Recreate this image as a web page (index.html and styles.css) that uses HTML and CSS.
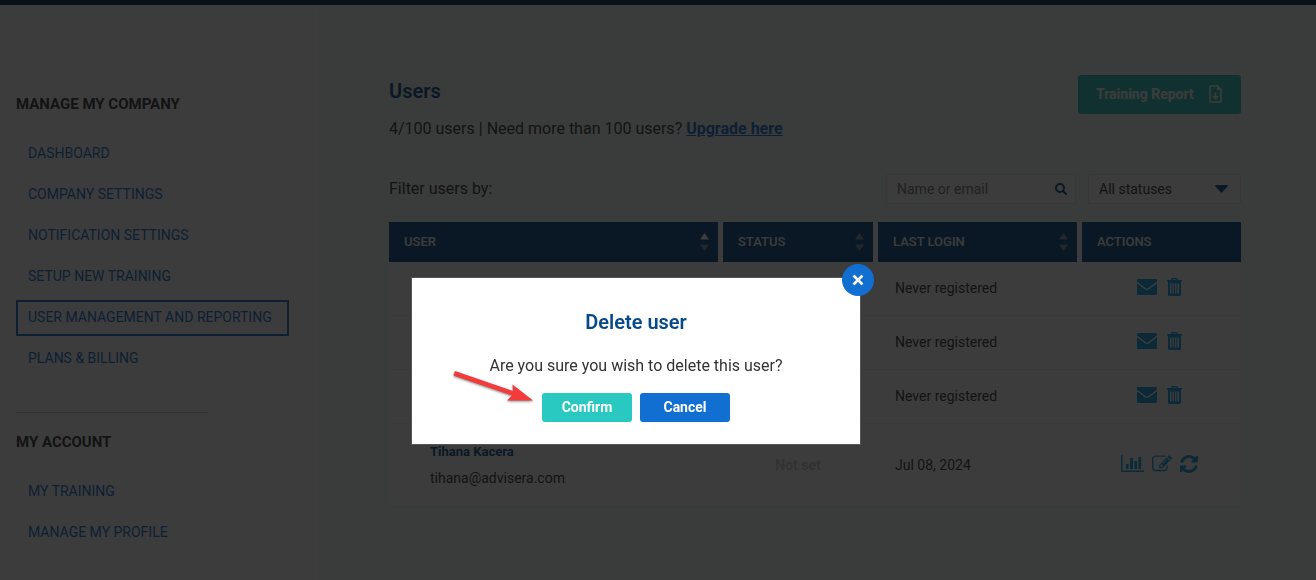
FILE: index.html
```html
<!DOCTYPE html>
<html lang="en">

<head>
    <meta charset="UTF-8">
    <meta name="viewport" content="width=device-width, initial-scale=1">
    <title>User management and reporting</title>
    <link rel="stylesheet" href="styles.css">
</head>

<body>
    <!-- icon shapes -->
    <svg class="sprite" aria-hidden="true">
        <symbol id="i-mail" viewBox="0 0 20 16">
            <path d="M1 0h18q1 0 1 1v1.500l-8.500 6.500q-1.500 1-3 0L0 2.500V1q0-1 1-1zM0 4.300l7.800 6q2.200 1.400 4.400 0l7.800-6V15q0 1-1 1H1q-1 0-1-1z" />
        </symbol>
        <symbol id="i-trash" viewBox="0 0 15 18">
            <path fill-rule="evenodd" d="M4 2V1.500Q4 0 5.500 0h4Q11 0 11 1.500V2h4v1.500h-1v13q0 1.500-1.500 1.500h-10Q1 18 1 16.500v-13H0V2zm1.500 0h4v-.8h-4zM3 5.500V15.500h1.500V5.500zm2.600 0V15.500h1.300V5.500zm2.500 0V15.500h1.300V5.500zm2.400 0V15.500H12V5.500z" />
        </symbol>
        <symbol id="i-chart" viewBox="0 0 23 17">
            <path d="M0 0h1.500v15.500H23V17H0zM5 9h2.500v5H5zM9 3h3v11H9zM13.500 6h2.500v8h-2.500zM17.500 2h2.700v12h-2.700z" />
        </symbol>
        <symbol id="i-edit" viewBox="0 100 1792 1500">
            <path d="M888 1184l116-116-152-152-116 116v56h96v96h56zm440-720q-16-16-33 1l-350 350q-17 17-1 33t33-1l350-350q17-17 1-33zm80 594v190q0 119-84.500 203.500t-203.500 84.500h-832q-119 0-203.500-84.500t-84.500-203.500v-832q0-119 84.500-203.500t203.500-84.500h832q63 0 117 25 15 7 18 23 3 17-9 29l-49 49q-14 14-32 8-23-6-45-6h-832q-66 0-113 47t-47 113v832q0 66 47 113t113 47h832q66 0 113-47t47-113v-126q0-13 9-22l64-64q15-15 35-7t20 29zm-96-738l288 288-672 672h-288v-288zm444 132l-92 92-288-288 92-92q28-28 68-28t68 28l152 152q28 28 28 68t-28 68z" />
        </symbol>
        <symbol id="i-refresh" viewBox="128 128 1536 1536">
            <path d="M1639 1056q0 5-1 7-64 268-268 434.500t-478 166.500q-146 0-282.500-55t-243.500-157l-129 129q-19 19-45 19t-45-19-19-45v-448q0-26 19-45t45-19h448q26 0 45 19t19 45-19 45l-137 137q71 66 161 102t187 36q134 0 250-65t186-179q11-17 53-117 8-23 30-23h192q13 0 22.500 9.500t9.500 22.500zm25-800v448q0 26-19 45t-45 19h-448q-26 0-45-19t-19-45 19-45l138-138q-148-137-349-137-134 0-250 65t-186 179q-11 17-53 117-8 23-30 23h-199q-13 0-22.500-9.500t-9.500-22.500v-7q65-268 270-434.500t480-166.500q146 0 284 55.500t245 156.500l130-129q19-19 45-19t45 19 19 45z" />
        </symbol>
    </svg>

    <div class="topbar"></div>
    <div class="page">
        <nav class="sidebar">
            <h2>MANAGE MY COMPANY</h2>
            <ul>
                <li><a href="#">DASHBOARD</a></li>
                <li><a href="#">COMPANY SETTINGS</a></li>
                <li><a href="#">NOTIFICATION SETTINGS</a></li>
                <li><a href="#">SETUP NEW TRAINING</a></li>
                <li><a href="#" class="active">USER MANAGEMENT AND REPORTING</a></li>
                <li><a href="#">PLANS &amp; BILLING</a></li>
            </ul>
            <hr>
            <h2>MY ACCOUNT</h2>
            <ul>
                <li><a href="#">MY TRAINING</a></li>
                <li><a href="#">MANAGE MY PROFILE</a></li>
            </ul>
        </nav>

        <main class="content">
            <header class="heading">
                <div>
                    <h1>Users</h1>
                    <p>4/100 users | Need more than 100 users? <a href="#">Upgrade here</a></p>
                </div>
                <button type="button" class="report">
                    Training Report
                    <svg width="13" height="18" viewBox="0 0 13 18" fill="none" stroke="currentColor" stroke-width="1.500">
                        <path d="M8.500 1H2Q1 1 1 2v14q0 1 1 1h9q1 0 1-1V5z" />
                        <path d="M8 0v5h5z" fill="currentColor" stroke="none" />
                        <path d="M6.500 7.500v6M4 11l2.500 2.700L9 11" />
                    </svg>
                </button>
            </header>

            <form class="filters">
                <span>Filter users by:</span>
                <div class="search">
                    <input type="text" placeholder="Name or email" aria-label="Name or email">
                    <button type="button" aria-label="Search">
                        <svg width="12" height="12" viewBox="0 0 12 12" fill="none" stroke="currentColor" stroke-width="2">
                            <circle cx="5" cy="5" r="4" />
                            <path d="M8 8l3.500 3.500" />
                        </svg>
                    </button>
                </div>
                <div class="status">
                    <select aria-label="Status">
                        <option>All statuses</option>
                    </select>
                    <svg width="13" height="8" viewBox="0 0 13 8">
                        <path d="M1 0h11q1.500 0.500 0.500 1.500L7.500 7q-1 1-2 0L0.500 1.500Q-0.500 0.500 1 0z" />
                    </svg>
                </div>
            </form>

            <table class="users">
                <colgroup>
                    <col>
                    <col class="c-status">
                    <col class="c-login">
                    <col class="c-actions">
                </colgroup>
                <thead>
                    <tr>
                        <th>
                            <div>USER
                                <svg class="sort asc" width="9" height="18" viewBox="0 0 9 18">
                                    <path class="up" d="M0 6.500L4.500 0 9 6.500z" />
                                    <path d="M0 11.500L4.500 18 9 11.500z" />
                                </svg>
                            </div>
                        </th>
                        <th>
                            <div>STATUS
                                <svg class="sort" width="9" height="18" viewBox="0 0 9 18">
                                    <path class="up" d="M0 6.500L4.500 0 9 6.500z" />
                                    <path d="M0 11.500L4.500 18 9 11.500z" />
                                </svg>
                            </div>
                        </th>
                        <th>
                            <div>LAST LOGIN
                                <svg class="sort" width="9" height="18" viewBox="0 0 9 18">
                                    <path class="up" d="M0 6.500L4.500 0 9 6.500z" />
                                    <path d="M0 11.500L4.500 18 9 11.500z" />
                                </svg>
                            </div>
                        </th>
                        <th><div>ACTIONS</div></th>
                    </tr>
                </thead>
                <tbody>
                    <tr>
                        <td></td>
                        <td></td>
                        <td>Never registered</td>
                        <td>
                            <div class="actions">
                                <button type="button" aria-label="Send email"><svg width="20" height="16"><use href="#i-mail" /></svg></button>
                                <button type="button" aria-label="Delete"><svg width="15" height="18"><use href="#i-trash" /></svg></button>
                            </div>
                        </td>
                    </tr>
                    <tr>
                        <td></td>
                        <td></td>
                        <td>Never registered</td>
                        <td>
                            <div class="actions">
                                <button type="button" aria-label="Send email"><svg width="20" height="16"><use href="#i-mail" /></svg></button>
                                <button type="button" aria-label="Delete"><svg width="15" height="18"><use href="#i-trash" /></svg></button>
                            </div>
                        </td>
                    </tr>
                    <tr>
                        <td></td>
                        <td></td>
                        <td>Never registered</td>
                        <td>
                            <div class="actions">
                                <button type="button" aria-label="Send email"><svg width="20" height="16"><use href="#i-mail" /></svg></button>
                                <button type="button" aria-label="Delete"><svg width="15" height="18"><use href="#i-trash" /></svg></button>
                            </div>
                        </td>
                    </tr>
                    <tr class="tall">
                        <td class="user"><strong>Tihana Kacera</strong>tihana@advisera.com</td>
                        <td class="notset">Not set</td>
                        <td>Jul 08, 2024</td>
                        <td>
                            <div class="actions small">
                                <button type="button" aria-label="Report"><svg width="23" height="17"><use href="#i-chart" /></svg></button>
                                <button type="button" aria-label="Edit"><svg width="20" height="17"><use href="#i-edit" /></svg></button>
                                <button type="button" aria-label="Refresh"><svg width="18" height="18"><use href="#i-refresh" /></svg></button>
                            </div>
                        </td>
                    </tr>
                </tbody>
            </table>
        </main>
    </div>

    <div class="overlay"></div>
    <div class="modal-wrap">
        <div class="modal" role="dialog" aria-labelledby="modal-title">
            <button type="button" class="close" aria-label="Close">
                <svg width="12" height="12" viewBox="0 0 12 12" stroke="currentColor" stroke-width="2.500">
                    <path d="M1.500 1.500l9 9M10.500 1.500l-9 9" />
                </svg>
            </button>
            <h2 id="modal-title">Delete user</h2>
            <p>Are you sure you wish to delete this user?</p>
            <div class="buttons">
                <button type="button" class="confirm">Confirm</button>
                <button type="button" class="cancel">Cancel</button>
            </div>
            <svg class="arrow" width="82" height="36" viewBox="0 0 82 36">
                <path d="M3 2L61 22 60.500 15.500 81 31.500 55 31.500 60 26.500 1.500 6.500z" />
            </svg>
        </div>
    </div>
</body>

</html>
```

FILE: styles.css
```css
* {
    box-sizing: border-box;
}

body {
    margin: 0;
    font-family: Roboto, "Liberation Sans", sans-serif;
    font-size: 14px;
    color: #333;
    background: #fff;
}

h1,
h2,
p,
ul {
    margin: 0;
    padding: 0;
}

ul {
    list-style: none;
}

a {
    color: #106fd1;
}

button,
input,
select {
    font-family: inherit;
    border: none;
    padding: 0;
}

button {
    cursor: pointer;
}

svg {
    display: block;
}

.sprite {
    display: none;
}

.topbar {
    height: 5px;
    background: #002a5b;
}

.page {
    display: flex;
    min-height: calc(100vh - 5px);
}

/* sidebar */
.sidebar {
    width: 318px;
    flex-shrink: 0;
    padding: 89px 16px 0;
}

.sidebar h2 {
    font-size: 15px;
    line-height: 20px;
    font-weight: 700;
}

.sidebar ul {
    display: flex;
    flex-direction: column;
    align-items: flex-start;
    gap: 5px;
    margin-top: 22px;
}

.sidebar a {
    display: block;
    border: 2px solid transparent;
    padding: 5px 15px 7px 10px;
    line-height: 20px;
    text-decoration: none;
}

.sidebar a.active {
    border-color: #106fd1;
}

.sidebar hr {
    width: 192px;
    margin: 35px 0 19px;
    border: none;
    border-top: 1px solid #ccc;
}

/* content */
.content {
    flex: 1;
    padding: 70px 75px 0 71px;
    background: #f5faf7;
}

.heading {
    display: flex;
    justify-content: space-between;
    align-items: flex-start;
}

h1 {
    margin-top: 4px;
    font-size: 20px;
    line-height: 24px;
    font-weight: 600;
    color: #064a8a;
}

.heading p {
    margin-top: 14px;
    font-size: 16px;
    line-height: 24px;
}

.heading a {
    font-weight: 700;
}

.report {
    display: flex;
    align-items: center;
    justify-content: space-between;
    width: 163px;
    height: 39px;
    padding: 0 19px 2px 18px;
    border-radius: 3px;
    background: #29c9c1;
    color: #fff;
    font-size: 14px;
    font-weight: 700;
}

.filters {
    display: flex;
    align-items: center;
    gap: 12px;
    margin-top: 33px;
}

.filters span {
    flex: 1;
    padding-bottom: 2px;
    font-size: 16px;
}

.search,
.status {
    display: flex;
    align-items: center;
    height: 30px;
    border: 1px solid #e3e3e3;
    background: #fff;
    color: #064a8a;
}

.search {
    width: 190px;
    padding: 0 8px 0 10px;
}

.search input {
    flex: 1;
    min-width: 0;
    font-size: 14px;
    background: none;
}

.search input::placeholder {
    color: #777;
}

.search button {
    background: none;
    color: inherit;
}

.status {
    width: 153px;
    padding: 0 12px 0 10px;
}

.status select {
    flex: 1;
    appearance: none;
    font-size: 14px;
    color: #333;
    background: none;
}

.status svg {
    fill: #064a8a;
}

/* table */
.users {
    width: 100%;
    margin-top: 18px;
    table-layout: fixed;
    border-collapse: separate;
    border-spacing: 0;
    background: #fff;
}

.c-status {
    width: 155px;
}

.c-login {
    width: 204px;
}

.c-actions {
    width: 159px;
}

.users th {
    height: 40px;
    padding: 0 5px 0 0;
    font-size: 13px;
    font-weight: 500;
    color: #fff;
}

.users th:last-child {
    padding: 0;
}

.users th div {
    display: flex;
    align-items: center;
    justify-content: space-between;
    height: 40px;
    padding: 0 9px 1px 15px;
    background: #064a8a;
}

.sort {
    fill: #8094ac;
}

.sort.asc .up {
    fill: #fff;
}

.users td {
    height: 54px;
    padding: 0 0 1px 17px;
    border-bottom: 1px solid #e9eeee;
}

.users td:last-child {
    padding: 0 5px 3px 0;
}

.users .tall td {
    height: 83px;
}

.users .user {
    padding: 0 0 0 41px;
    line-height: 26px;
}

.user strong {
    display: block;
    font-size: 13px;
    font-weight: 700;
    color: #064a8a;
}

.users .notset {
    padding: 0 5px 1px 0;
    text-align: center;
    font-weight: 700;
    color: #ccc;
}

.actions {
    display: flex;
    align-items: center;
    justify-content: center;
    gap: 10px;
}

.actions.small {
    gap: 8px;
}

.actions button {
    background: none;
    fill: #0a9fe6;
}

/* popup */
.overlay {
    position: fixed;
    inset: 0;
    background: #0b0b0b;
    opacity: .8;
}

.modal-wrap {
    position: fixed;
    inset: 0;
    display: flex;
    justify-content: center;
    align-items: flex-start;
    padding: 278px 44px 0 0;
}

.modal {
    position: relative;
    width: 448px;
    padding: 32px 20px 22px;
    background: #fff;
    box-shadow: 0 0 0 1px #555;
    text-align: center;
}

.modal h2 {
    font-size: 20px;
    line-height: 24px;
    font-weight: 600;
    color: #064a8a;
}

.modal p {
    margin-top: 20px;
    font-size: 16px;
    line-height: 24px;
}

.buttons {
    display: flex;
    justify-content: center;
    gap: 8px;
    margin-top: 15px;
}

.buttons button {
    width: 90px;
    height: 29px;
    padding-bottom: 2px;
    border-radius: 3px;
    color: #fff;
    font-size: 14px;
    font-weight: 700;
}

.buttons .confirm {
    background: #29c9c1;
}

.buttons .cancel {
    background: #106fd1;
}

.close {
    position: absolute;
    top: -14px;
    right: -14px;
    display: flex;
    align-items: center;
    justify-content: center;
    width: 32px;
    height: 32px;
    border-radius: 50%;
    background: #106fd1;
    color: #fff;
}

.arrow {
    position: absolute;
    top: 91px;
    left: 40px;
    fill: #f43b3b;
    filter: drop-shadow(0 1px 1px rgba(0, 0, 0, .5));
}
```
